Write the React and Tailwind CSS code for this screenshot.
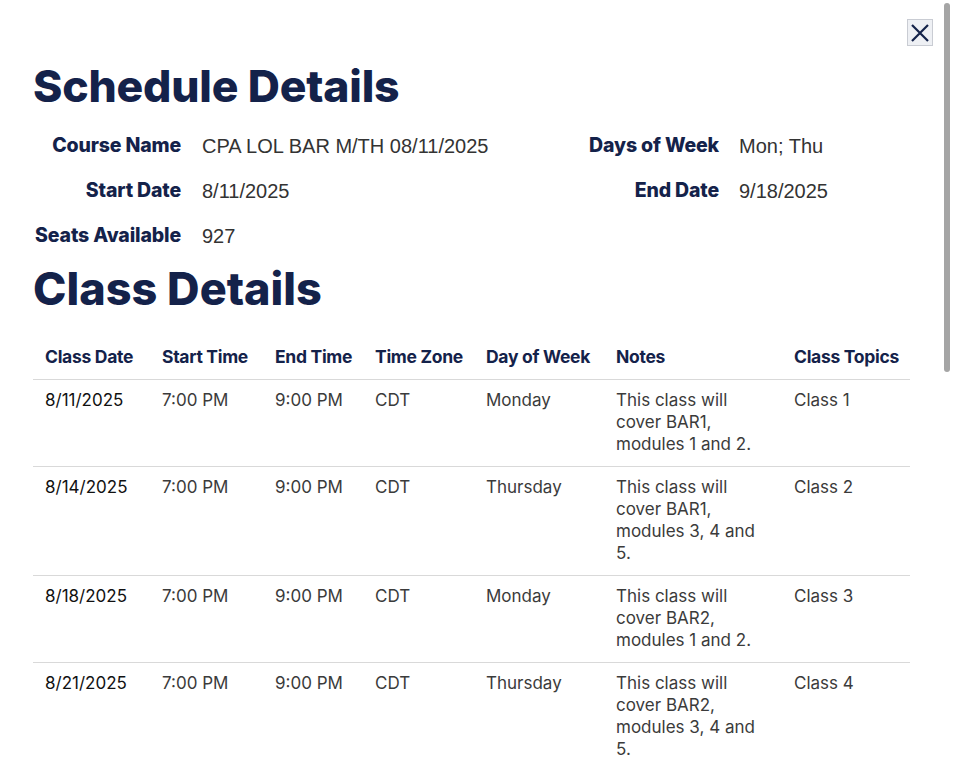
import React from "react";

const rows = [
  { date: "8/11/2025", start: "7:00 PM", end: "9:00 PM", tz: "CDT", day: "Monday", notes: "This class will cover BAR1, modules 1 and 2.", topic: "Class 1" },
  { date: "8/14/2025", start: "7:00 PM", end: "9:00 PM", tz: "CDT", day: "Thursday", notes: "This class will cover BAR1, modules 3, 4 and 5.", topic: "Class 2" },
  { date: "8/18/2025", start: "7:00 PM", end: "9:00 PM", tz: "CDT", day: "Monday", notes: "This class will cover BAR2, modules 1 and 2.", topic: "Class 3" },
  { date: "8/21/2025", start: "7:00 PM", end: "9:00 PM", tz: "CDT", day: "Thursday", notes: "This class will cover BAR2, modules 3, 4 and 5.", topic: "Class 4" },
];

const headers = ["Class Date", "Start Time", "End Time", "Time Zone", "Day of Week", "Notes", "Class Topics"];
const widths = ["w-[117px]", "w-[113px]", "w-[100px]", "w-[111px]", "w-[130px]", "w-[178px]", "w-[128px]"];

export default function App() {
  return (
    <div className="relative h-[758px] overflow-hidden bg-white font-['Inter',sans-serif]">
      <button className="absolute left-[907px] top-[19px] flex h-[27px] w-[26px] items-center justify-center border border-[#c9ccd3] bg-[#eef0f4]">
        <svg width="20" height="20" viewBox="0 0 20 20" fill="none" stroke="#14224a" strokeWidth="2.2">
          <path d="M2 2 L18 18 M18 2 L2 18" />
        </svg>
      </button>
      <div className="absolute left-[944px] top-[3px] h-[369px] w-[6px] rounded-full bg-[#a5a5a5]" />

      <div className="pl-[33px] pt-[58px]">
        <h1 className="text-[44.5px] font-extrabold leading-[56px] tracking-[-0.2px] text-[#14224a]">Schedule Details</h1>
        <div className="mt-[9px] grid grid-cols-[148px_281px_217px_1fr] gap-x-[20px]">
          {[
            ["Course Name", "CPA LOL BAR M/TH 08/11/2025", "Days of Week", "Mon; Thu"],
            ["Start Date", "8/11/2025", "End Date", "9/18/2025"],
            ["Seats Available", "927", "", ""],
          ].map((r, i) => (
            <React.Fragment key={i}>
              <div className="flex h-[45px] items-center justify-end whitespace-nowrap pt-[1px] text-[19.5px] font-extrabold tracking-[-0.15px] text-[#14224a]">{r[0]}</div>
              <div className="flex h-[45px] items-center pl-[1px] whitespace-nowrap font-['Liberation_Sans',sans-serif] text-[20px] text-[#333]">{r[1]}</div>
              <div className="flex h-[45px] items-center justify-end whitespace-nowrap pt-[1px] text-[19.5px] font-extrabold tracking-[-0.15px] text-[#14224a]">{r[2]}</div>
              <div className="flex h-[45px] items-center whitespace-nowrap font-['Liberation_Sans',sans-serif] text-[20px] text-[#333]">{r[3]}</div>
            </React.Fragment>
          ))}
        </div>
        <h2 className="mt-[3px] text-[45px] font-extrabold leading-[56px] tracking-[0px] text-[#14224a]">Class Details</h2>

        <table className="mt-[29px] w-[877px] table-fixed border-collapse">
          <thead>
            <tr className="border-b border-[#d9d9d9]">
              {headers.map((h, i) => (
                <th key={h} className={`${widths[i]} whitespace-nowrap px-[12px] pb-[11px] text-left text-[17.5px] font-bold leading-[22px] tracking-[-0.3px] text-[#14224a]`}>{h}</th>
              ))}
            </tr>
          </thead>
          <tbody>
            {rows.map((r, i) => (
              <tr key={i} className="border-b border-[#d9d9d9] align-top">
                <td className="px-[12px] pt-[9px] pb-[11px] text-[17px] leading-[22px] text-[#111]">{r.date}</td>
                <td className="px-[12px] pt-[9px] pb-[11px] text-[17px] leading-[22px] text-[#3b3b3b]">{r.start}</td>
                <td className="px-[12px] pt-[9px] pb-[11px] text-[17px] leading-[22px] text-[#3b3b3b]">{r.end}</td>
                <td className="px-[12px] pt-[9px] pb-[11px] text-[17px] leading-[22px] text-[#3b3b3b]">{r.tz}</td>
                <td className="px-[12px] pt-[9px] pb-[11px] text-[17px] leading-[22px] text-[#3b3b3b]">{r.day}</td>
                <td className="px-[12px] pt-[9px] pb-[11px] text-[17px] leading-[22px] text-[#3b3b3b]">{r.notes}</td>
                <td className="px-[12px] pt-[9px] pb-[11px] text-[17px] leading-[22px] text-[#3b3b3b]">{r.topic}</td>
              </tr>
            ))}
          </tbody>
        </table>
      </div>
    </div>
  );
}
